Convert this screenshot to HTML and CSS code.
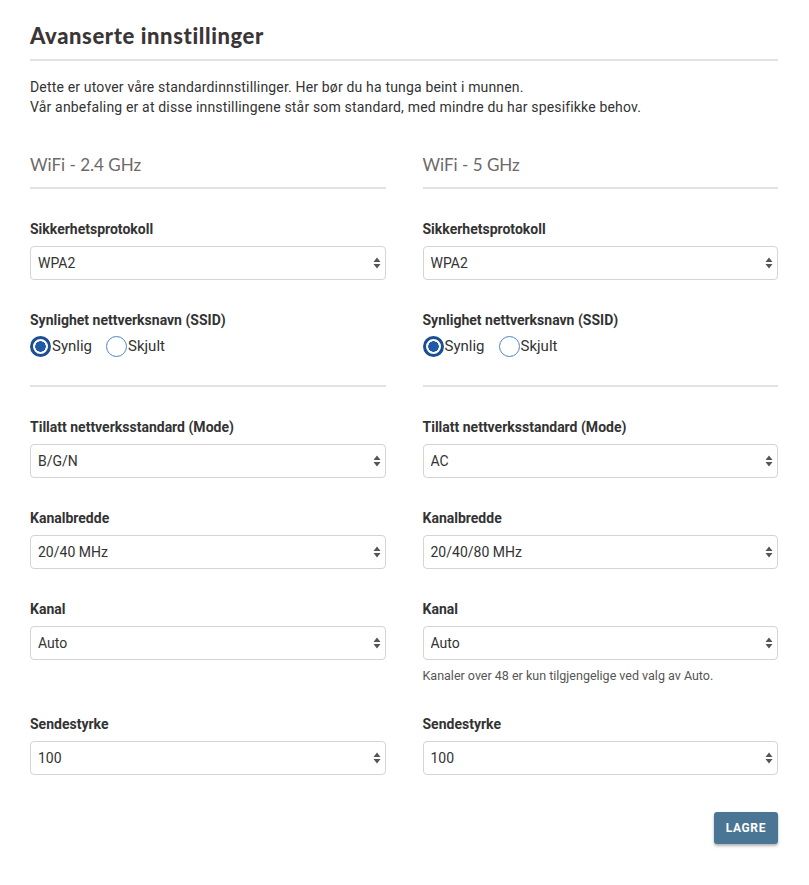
FILE: index.html
```html
<!DOCTYPE html>
<html lang="no">
<head>
  <meta charset="UTF-8" />
  <meta name="viewport" content="width=device-width, initial-scale=1.0"/>
  <title>Avanserte innstillinger</title>
  <link rel="stylesheet" href="styles.css">
</head>
<body>
  <div class="page">
    <h1>Avanserte innstillinger</h1>

    <p class="intro">
      Dette er utover våre standardinnstillinger. Her bør du ha tunga beint i munnen.<br>
      Vår anbefaling er at disse innstillingene står som standard, med mindre du har spesifikke behov.
    </p>

    <div class="row head-row">
      <h2>WiFi - 2.4 GHz</h2>
      <h2>WiFi - 5 GHz</h2>
    </div>

    <div class="row">
      <div class="field">
        <label>Sikkerhetsprotokoll</label>
        <select><option>WPA2</option></select>
      </div>
      <div class="field">
        <label>Sikkerhetsprotokoll</label>
        <select><option>WPA2</option></select>
      </div>
    </div>

    <div class="row divided">
      <div class="field">
        <label>Synlighet nettverksnavn (SSID)</label>
        <div class="radios">
          <label class="radio"><input type="radio" name="ssid24" checked>Synlig</label>
          <label class="radio"><input type="radio" name="ssid24">Skjult</label>
        </div>
      </div>
      <div class="field">
        <label>Synlighet nettverksnavn (SSID)</label>
        <div class="radios">
          <label class="radio"><input type="radio" name="ssid5" checked>Synlig</label>
          <label class="radio"><input type="radio" name="ssid5">Skjult</label>
        </div>
      </div>
    </div>

    <div class="row">
      <div class="field">
        <label>Tillatt nettverksstandard (Mode)</label>
        <select><option>B/G/N</option></select>
      </div>
      <div class="field">
        <label>Tillatt nettverksstandard (Mode)</label>
        <select><option>AC</option></select>
      </div>
    </div>

    <div class="row">
      <div class="field">
        <label>Kanalbredde</label>
        <select><option>20/40 MHz</option></select>
      </div>
      <div class="field">
        <label>Kanalbredde</label>
        <select><option>20/40/80 MHz</option></select>
      </div>
    </div>

    <div class="row">
      <div class="field">
        <label>Kanal</label>
        <select><option>Auto</option></select>
      </div>
      <div class="field">
        <label>Kanal</label>
        <select><option>Auto</option></select>
        <div class="help">Kanaler over 48 er kun tilgjengelige ved valg av Auto.</div>
      </div>
    </div>

    <div class="row">
      <div class="field">
        <label>Sendestyrke</label>
        <select><option>100</option></select>
      </div>
      <div class="field">
        <label>Sendestyrke</label>
        <select><option>100</option></select>
      </div>
    </div>

    <div class="actions">
      <button>LAGRE</button>
    </div>
  </div>
</body>
</html>
```

FILE: styles.css
```css
body {
  margin: 0;
  background-color: #fff;
  color: #333;
  font-family: Roboto, 'Liberation Sans', sans-serif;
  font-size: 14px;
}
.page {
  width: 748px;
  padding: 22px 0 40px 30px;
}
h1 {
  margin: 0;
  padding-bottom: 9px;
  border-bottom: 2px solid #e2e2e2;
  font-family: Lato, 'Noto Sans', sans-serif;
  font-weight: 900;
  font-size: 22px;
  line-height: 28px;
  color: #3a3536;
  letter-spacing: 0.6px;
}
.intro {
  margin: 16px 0 37px;
  line-height: 20px;
  letter-spacing: 0.17px;
}
.row {
  display: grid;
  grid-template-columns: 1fr 1fr;
  column-gap: 37px;
  margin-bottom: 31px;
}
h2 {
  margin: 0;
  padding-bottom: 11px;
  border-bottom: 2px solid #e2e2e2;
  font-family: Lato, 'Noto Sans', sans-serif;
  font-weight: 400;
  font-size: 17px;
  line-height: 22px;
  color: #6e6869;
}
.divided {
  margin-top: 1px;
}
.divided .field {
  padding-bottom: 28px;
  border-bottom: 2px solid #e2e2e2;
}
.field > label {
  display: block;
  font-weight: 700;
  line-height: 18px;
  margin-bottom: 8px;
}
select {
  display: block;
  width: 100%;
  height: 34px;
  padding: 0 24px 0 7px;
  border: 1px solid #d4d4d4;
  border-radius: 4px;
  background: #fff url("data:image/svg+xml;utf8,<svg xmlns='http://www.w3.org/2000/svg' width='8' height='12' viewBox='0 0 8 12'><path d='M4 0.5L7.5 5H0.5z M4 11.5L7.5 7H0.5z' fill='%23555'/></svg>") no-repeat right 4px center;
  appearance: none;
  -webkit-appearance: none;
  font-family: Roboto, 'Liberation Sans', sans-serif;
  font-size: 14px;
  color: #333;
}
.radios {
  display: flex;
  gap: 14px;
  margin-top: -2px;
}
.radio {
  display: flex;
  align-items: center;
  font-size: 15px;
  line-height: 22px;
}
.radio input {
  appearance: none;
  -webkit-appearance: none;
  width: 21px;
  height: 21px;
  margin: 0 1px 0 0;
  border: 1px solid #4f83c9;
  border-radius: 50%;
  background: #fff;
}
.radio input:checked {
  border: 3px solid #1c4f92;
  background: radial-gradient(circle, #1f5aa6 0 5px, #fff 5.5px);
}
.help {
  margin-top: 8px;
  font-size: 12.5px;
  line-height: 16px;
  color: #555;
}
.actions {
  display: flex;
  justify-content: flex-end;
  margin-top: 37px;
}
button {
  height: 32px;
  padding: 0 12px;
  border: none;
  border-radius: 3px;
  background-color: #4b7595;
  color: white;
  font-family: Roboto, 'Liberation Sans', sans-serif;
  font-weight: 700;
  font-size: 12px;
  letter-spacing: 0.6px;
  box-shadow: 0 2px 3px rgba(0, 0, 0, 0.3);
  cursor: pointer;
}
```
